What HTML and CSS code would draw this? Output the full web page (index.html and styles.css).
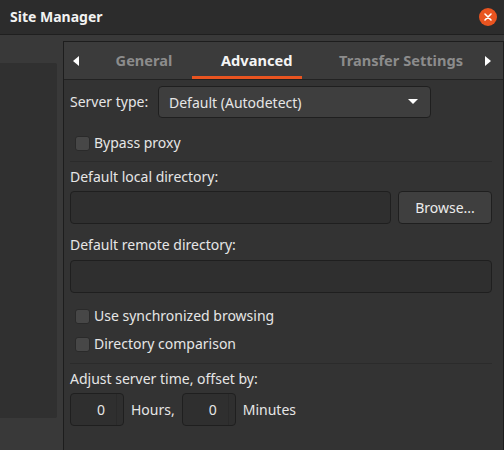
FILE: index.html
```html
<!DOCTYPE html>
<html>
<head>
<meta charset="utf-8">
<link rel="stylesheet" href="styles.css">
</head>
<body>
<div class="window">
  <header class="titlebar">
    <span class="title">Site Manager</span>
    <button class="close" aria-label="Close">
      <svg width="18" height="18" viewBox="0 0 18 18"><circle cx="9" cy="9" r="9" fill="#e95420"/><path d="M6 6 L12 12 M12 6 L6 12" stroke="#fff" stroke-width="1.6" stroke-linecap="round"/></svg>
    </button>
  </header>
  <div class="main">
    <aside class="sidebar"><div class="tree"></div></aside>
    <section class="notebook">
      <nav class="tabs">
        <span class="tab-arrow"><svg width="6" height="10" viewBox="0 0 6 10"><path d="M6 0 L6 10 L0 5 Z" fill="#fff"/></svg></span>
        <span class="tab">General</span>
        <span class="tab active">Advanced</span>
        <span class="tab">Transfer Settings</span>
        <span class="tab-arrow"><svg width="6" height="10" viewBox="0 0 6 10"><path d="M0 0 L0 10 L6 5 Z" fill="#fff"/></svg></span>
      </nav>
      <div class="page">
        <div class="row server">
          <span class="label">Server type:</span>
          <div class="combo">
            <span>Default (Autodetect)</span>
            <svg width="10" height="6" viewBox="0 0 10 6"><path d="M0 0 L10 0 L5 5 Z" fill="#fff"/></svg>
          </div>
        </div>
        <label class="check bypass"><span class="box"></span>Bypass proxy</label>
        <div class="sep sep1"></div>
        <div class="label l-local">Default local directory:</div>
        <div class="row entry-row">
          <div class="entry grow"></div>
          <button class="btn">Browse...</button>
        </div>
        <div class="label l-remote">Default remote directory:</div>
        <div class="entry full"></div>
        <label class="check sync"><span class="box"></span>Use synchronized browsing</label>
        <label class="check cmp"><span class="box"></span>Directory comparison</label>
        <div class="sep sep2"></div>
        <div class="label l-adjust">Adjust server time, offset by:</div>
        <div class="row spins">
          <div class="spin"><span class="val">0</span><span class="spin-end"></span></div>
          <span class="unit">Hours,</span>
          <div class="spin"><span class="val">0</span><span class="spin-end"></span></div>
          <span class="unit">Minutes</span>
        </div>
      </div>
    </section>
  </div>
</div>
</body>
</html>
```
FILE: styles.css
```css
* { box-sizing: border-box; }
html, body { margin: 0; padding: 0; }
body {
  width: 504px;
  height: 450px;
  overflow: hidden;
  background: #393939;
  font-family: "Noto Sans", "Open Sans", sans-serif;
  font-size: 14px;
  color: #e6e6e6;
}
.window { width: 504px; height: 450px; display: flex; flex-direction: column; }
.titlebar {
  height: 35px;
  flex: none;
  background: #2c2c2c;
  border-bottom: 1px solid #1f1f1f;
  display: flex;
  align-items: center;
  justify-content: space-between;
  padding: 0 7px 1px 10px;
}
.title { font-weight: bold; font-size: 14px; color: #f2f2f2; }
.close { border: 0; padding: 0; background: none; width: 18px; height: 18px; display: block; }
.close svg { display: block; }
.main { flex: 1; display: flex; min-height: 0; }
.sidebar { width: 63px; flex: none; padding-top: 28px; }
.tree { width: 57px; height: 355px; background: #303030; border-radius: 0 2px 2px 0; }
.notebook {
  flex: 1;
  margin-top: 6px;
  border-left: 1px solid #1d1d1d;
  border-top: 1px solid #1d1d1d;
  border-right: 1px solid #1d1d1d;
  display: flex;
  flex-direction: column;
  background: #333333;
}
.tabs {
  height: 38px;
  flex: none;
  background: #3b3b3b;
  border-bottom: 1px solid #222;
  display: flex;
  align-items: stretch;
  padding: 0 0 0 9px;
}
.tab-arrow { display: flex; align-items: center; width: 6px; }
.tab-arrow:last-child { margin-left: auto; margin-right: 12px; }
.tab {
  display: flex;
  align-items: center;
  justify-content: center;
  font-weight: bold;
  font-size: 14.6px;
  color: #8c8c8c;
  padding-top: 1px;
  border-bottom: 3px solid transparent;
}
.tab:nth-child(2) { width: 96px; margin-left: 17px; }
.tab.active { width: 110px; color: #f4f4f4; border-bottom-color: #e95420; justify-content: flex-start; padding-left: 29px; }
.tab:nth-child(4) { justify-content: flex-start; padding-left: 37px; }
.page { padding: 6px 11px 0 6px; display: flex; flex-direction: column; }
.row { display: flex; align-items: center; }
.label { line-height: 20px; }
.server .label { width: 88px; }
.combo {
  width: 273px;
  height: 32px;
  background: #3e3e3e;
  border: 1px solid #1f1f1f;
  border-radius: 4px;
  display: flex;
  align-items: center;
  justify-content: space-between;
  padding: 0 12px 0 10px;
}
.check { display: flex; align-items: center; line-height: 20px; padding-left: 5px; }
.box {
  width: 15px; height: 15px;
  background: #474747;
  border: 1px solid #2a2a2a;
  border-radius: 3px;
  margin-right: 4px;
}
.bypass { margin-top: 15px; }
.sep { height: 1px; background: #2b2b2b; }
.sep1 { margin-top: 8px; }
.l-local { margin-top: 5px; }
.entry-row { margin-top: 4px; gap: 7px; }
.entry {
  height: 33px;
  background: #2f2f2f;
  border: 1px solid #1f1f1f;
  border-radius: 4px;
}
.grow { flex: 1; }
.btn {
  width: 94px; height: 33px;
  background: #3f3f3f;
  border: 1px solid #1f1f1f;
  border-radius: 4px;
  color: #ececec;
  font: inherit;
  padding: 0;
}
.l-remote { margin-top: 11px; }
.full { margin-top: 5px; }
.sync { margin-top: 13px; }
.cmp { margin-top: 8px; }
.sep2 { margin-top: 9px; }
.l-adjust { margin-top: 5px; }
.spins { margin-top: 4px; }
.spin {
  width: 54px; height: 33px;
  background: #2f2f2f;
  border: 1px solid #1f1f1f;
  border-radius: 4px;
  display: flex;
}
.val { flex: 1; text-align: right; padding-right: 11px; line-height: 31px; }
.spin-end { width: 7px; border-left: 1px solid #2a2a2a; }
.unit { margin: 0 7px 0 7px; }
```
